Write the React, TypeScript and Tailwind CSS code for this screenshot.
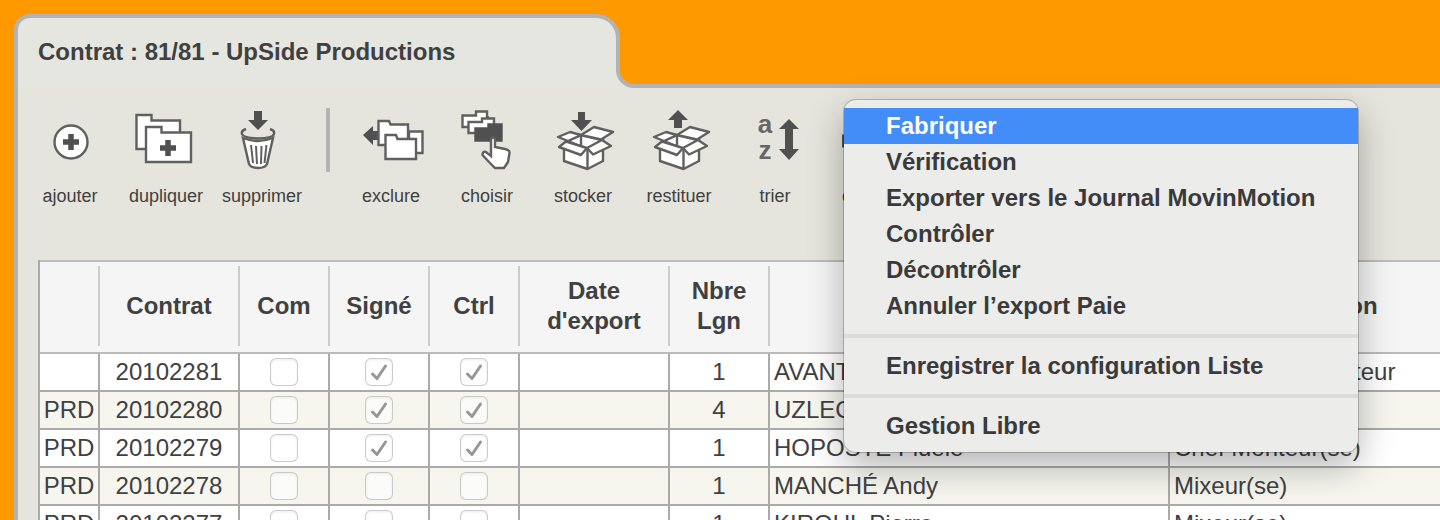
import type { ReactNode } from 'react';

const contrats = [
  { type: '', num: '20102281', signe: true, ctrl: true, lgn: 1, nom: 'AVANT Julie', fonction: 'Assistant(e) Monteur' },
  { type: 'PRD', num: '20102280', signe: true, ctrl: true, lgn: 4, nom: 'UZLEC Marie', fonction: 'Réalisateur' },
  { type: 'PRD', num: '20102279', signe: true, ctrl: true, lgn: 1, nom: 'HOPOSTE Fidèle', fonction: 'Chef Monteur(se)' },
  { type: 'PRD', num: '20102278', signe: false, ctrl: false, lgn: 1, nom: 'MANCHÉ Andy', fonction: 'Mixeur(se)' },
  { type: 'PRD', num: '20102277', signe: false, ctrl: false, lgn: 1, nom: 'KIROUL Pierre', fonction: 'Mixeur(se)' },
];

const menuGroups = [
  ['Fabriquer', 'Vérification', 'Exporter vers le Journal MovinMotion', 'Contrôler', 'Décontrôler', 'Annuler l’export Paie'],
  ['Enregistrer la configuration Liste'],
  ['Gestion Libre'],
];

const Icon = ({ children }: { children: ReactNode }) => (
  <svg
    viewBox="0 0 64 64"
    className="size-16 overflow-visible"
    fill="#fff"
    stroke="#606060"
    strokeWidth="2.4"
    aria-hidden="true"
  >
    {children}
  </svg>
);

const AddIcon = () => (
  <Icon>
    <circle cx="33" cy="34" r="16.5" />
    <path d="M33 26v16M25 34h16" stroke="#505050" strokeWidth="5.5" />
  </Icon>
);

const DuplicateIcon = () => (
  <Icon>
    <path d="M2.5 7h15v5.5h28.500V41h-43.500z" />
    <path d="M12 19h15.500v5.500H57V54H12z" />
    <path d="M34 32v16M26 40h16" stroke="#505050" strokeWidth="5.5" />
  </Icon>
);

const TrashIcon = () => (
  <Icon>
    <path d="M13 30l6 26q2 4 9 4t9-4l6-26q-15 6-30 0z" />
    <path d="M16 21q-5 1.500-4 5 1 4 16 4.500 15-.500 16-4.500 1-3.500-4-5" fill="none" />
    <path d="M21 37l2 18M26 38l1 18M31.500 38l-.500 18M36.500 37l-2 18" fill="none" strokeWidth="2" />
    <path d="M24 3h8v9h6L28 22 18 12h6z" fill="#505050" stroke="none" />
  </Icon>
);

const ExcludeIcon = () => (
  <Icon>
    <path d="M4 27l10-9v5h6v9h-6v5z" fill="#505050" stroke="none" />
    <path d="M50 23.500h13.500V45H50z" />
    <path d="M19.500 13H30l1.500 3.500H49V37H19.500z" />
    <path d="M26.500 27H37l1.500 4H57v20H26.500z" />
  </Icon>
);

const ChooseIcon = () => (
  <Icon>
    <path d="M7.500 7.500H21v-4h11v6h1V19H7.500z" />
    <path d="M13.500 14H27v-3.500h12V25H13.500z" />
    <path d="M20.500 20.500h13v-4h13v16h-26z" fill="#505050" stroke="#505050" />
    <path d="M36 31q2-3 4 0v8l10 2q5 1 4.500 4L53 54l-4 6h-9l-5-5-7.500-8q0-4 3.500-3l5 4z" />
  </Icon>
);

const BoxIcon = ({ out = false }: { out?: boolean }) => (
  <Icon>
    <path d="M13 36v17l23.500 8L52 53V36z" strokeLinejoin="round" />
    <path d="M17 33l13-6 21 5-15 9z" />
    <path d="M7 29l12-5 11 3-13 6zM30 27l13-8 19 5-12 7.500z" strokeLinejoin="round" />
    <path d="M15 33.500L8 39l22 8 6-7zM36 40l6 6.500L60 38l-9-6z" strokeLinejoin="round" />
    <path d="M30 27v10M36.500 41v20" />
    {out ? (
      <path d="M31 2l10 10h-6v8h-8v-8h-6z" fill="#505050" stroke="none" />
    ) : (
      <path d="M27 4h7v8h7L30.500 23 20 12h7z" fill="#505050" stroke="none" />
    )}
  </Icon>
);

const SortIcon = () => (
  <Icon>
    <g className="font-['Liberation_Sans'] text-[26px] font-bold" fill="#666" stroke="none" textAnchor="middle">
      <text x="22" y="25">a</text>
      <text x="22" y="51">z</text>
    </g>
    <path d="M46 11l10 10h-6v20h6L46 52 36 41h6V21h-6z" fill="#505050" stroke="none" />
  </Icon>
);

const OptionsIcon = () => (
  <Icon>
    <path d="M33 3v60M3 33h60M12 12l42 42M54 12L12 54" stroke="#505050" strokeWidth="13" />
    <circle cx="33" cy="33" r="17" stroke="#505050" strokeWidth="12" />
  </Icon>
);

const ToolButton = ({ label, children }: { label: string; children: ReactNode }) => (
  <button type="button" className="flex w-24 shrink-0 flex-col items-center gap-2.5">
    {children}
    <span className="text-lg leading-7">{label}</span>
  </button>
);

const CheckCell = ({ label, checked }: { label: string; checked: boolean }) => (
  <td className="border-r-2 border-b-2 border-[#aaa]">
    <label className="relative mx-auto block size-7">
      <input
        type="checkbox"
        aria-label={label}
        defaultChecked={checked}
        className="peer block size-7 appearance-none rounded-md border border-black/20 bg-white/60 shadow-[inset_0_1px_3px_rgba(0,0,0,0.08)]"
      />
      <svg
        viewBox="0 0 28 28"
        className="pointer-events-none absolute inset-0 hidden peer-checked:block"
        fill="none"
        stroke="#979797"
        strokeWidth="3"
        strokeLinecap="round"
        strokeLinejoin="round"
      >
        <path d="M7.500 16l4.500 4.500L20.500 8" />
      </svg>
    </label>
  </td>
);

const HeadCell = ({ children }: { children?: ReactNode }) => (
  <th scope="col" className="border-y-2 border-[#bbb] bg-[#f5f5f5] pt-1 pb-1.5 font-bold">
    <div className="flex h-20 items-center justify-center border-r-2 border-[#ccc] leading-[30px]">{children}</div>
  </th>
);

const ActionMenu = () => (
  <div
    role="menu"
    className="absolute top-3 left-[21px] z-10 w-[514px] rounded-xl bg-[#ececeb] py-2 text-2xl font-bold text-[#3a3a3a] shadow-[0_0_0_1px_rgba(0,0,0,0.2),0_14px_36px_rgba(0,0,0,0.3)]"
  >
    {menuGroups.map((group, i) => (
      <div key={i}>
        {i > 0 && <hr className="my-2.5 border-t-4 border-[#dcdcdc]" />}
        {group.map((item) => (
          <button
            key={item}
            type="button"
            role="menuitem"
            className={
              item === 'Fabriquer'
                ? 'block h-9 w-full bg-[#438df8] pl-[42px] text-left whitespace-nowrap text-white'
                : 'block h-9 w-full pl-[42px] text-left whitespace-nowrap'
            }
          >
            {item}
          </button>
        ))}
      </div>
    ))}
  </div>
);

const App = () => (
  <div className="flex h-screen flex-col overflow-hidden bg-[#ff9900] pt-3.5 pl-3.5 font-['Liberation_Sans',sans-serif] text-[#404040]">
    <header>
      <div className="h-[54px] w-[606px] rounded-tl-2xl rounded-tr-3xl border-x-4 border-t-4 border-[#b3b3b3] bg-[#e5e6df] px-5 pt-5">
        <h1 className="text-2xl leading-7 font-bold whitespace-nowrap">Contrat : 81/81 - UpSide Productions</h1>
      </div>
      {/* foot of the tab, curving into the top edge of the panel */}
      <div className="flex h-5 bg-[#e5e6df]">
        <div className="w-[602px] shrink-0 border-l-4 border-[#b3b3b3]" />
        <div className="flex-1 rounded-bl-[18px] border-b-4 border-l-4 border-[#b3b3b3] bg-[#ff9900]" />
      </div>
    </header>

    <main className="min-h-0 flex-1 border-l-4 border-[#b3b3b3] bg-[#e5e5dd]">
      <nav className="flex pt-5 pb-[50px] pl-1">
        <ToolButton label="ajouter"><AddIcon /></ToolButton>
        <ToolButton label="dupliquer"><DuplicateIcon /></ToolButton>
        <ToolButton label="supprimer"><TrashIcon /></ToolButton>
        <div className="mr-[13px] ml-4 h-16 w-1 shrink-0 bg-[#b3b3b3]" />
        <ToolButton label="exclure"><ExcludeIcon /></ToolButton>
        <ToolButton label="choisir"><ChooseIcon /></ToolButton>
        <ToolButton label="stocker"><BoxIcon /></ToolButton>
        <ToolButton label="restituer"><BoxIcon out /></ToolButton>
        <ToolButton label="trier"><SortIcon /></ToolButton>
        <div className="relative -mt-5 pt-5">
          <ToolButton label="options"><OptionsIcon /></ToolButton>
          <ActionMenu />
        </div>
      </nav>

      <div className="pl-5">
        <table className="w-full min-w-[1448px] table-fixed border-separate border-spacing-0 border-l-2 border-[#aaa] text-2xl">
          <colgroup>
            <col className="w-[60px]" />
            <col className="w-[140px]" />
            <col className="w-[90px]" />
            <col className="w-[100px]" />
            <col className="w-[90px]" />
            <col className="w-[150px]" />
            <col className="w-[100px]" />
            <col className="w-[400px]" />
            <col />
          </colgroup>
          <thead>
            <tr>
              <HeadCell />
              <HeadCell>Contrat</HeadCell>
              <HeadCell>Com</HeadCell>
              <HeadCell>Signé</HeadCell>
              <HeadCell>Ctrl</HeadCell>
              <HeadCell>Date<br />d'export</HeadCell>
              <HeadCell>Nbre<br />Lgn</HeadCell>
              <HeadCell>Nom</HeadCell>
              <HeadCell>Fonction</HeadCell>
            </tr>
          </thead>
          <tbody>
            {contrats.map((c) => (
              <tr key={c.num} className="h-[38px] bg-white leading-9 whitespace-nowrap even:bg-[#f6f6ef]">
                <td className="border-r-2 border-b-2 border-[#aaa] text-center">{c.type}</td>
                <td className="border-r-2 border-b-2 border-[#aaa] text-center">{c.num}</td>
                <CheckCell label={`Com ${c.num}`} checked={false} />
                <CheckCell label={`Signé ${c.num}`} checked={c.signe} />
                <CheckCell label={`Ctrl ${c.num}`} checked={c.ctrl} />
                <td className="border-r-2 border-b-2 border-[#aaa]" />
                <td className="border-r-2 border-b-2 border-[#aaa] text-center">{c.lgn}</td>
                <td className="border-r-2 border-b-2 border-[#aaa] pl-1">{c.nom}</td>
                <td className="border-r-2 border-b-2 border-[#aaa] pl-1">{c.fonction}</td>
              </tr>
            ))}
          </tbody>
        </table>
      </div>
    </main>
  </div>
);

export default App;
